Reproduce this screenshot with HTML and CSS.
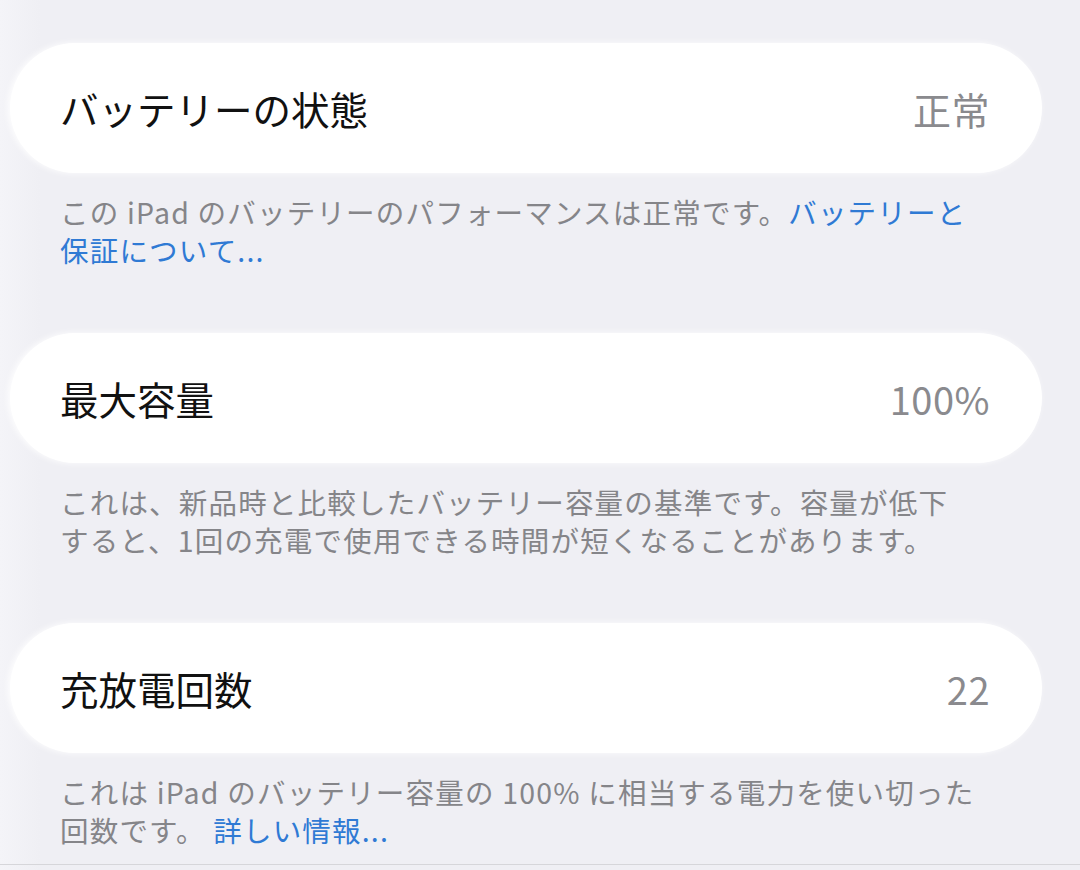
FILE: index.html
```html
<!DOCTYPE html>
<html lang="ja">
<head>
    <meta charset="UTF-8">
    <meta name="viewport" content="width=device-width, initial-scale=1.0">
    <title>バッテリーの状態</title>
    <link rel="stylesheet" href="styles.css">
</head>
<body>
    <div class="list">
        <div class="group">
            <div class="cell">
                <span class="label">バッテリーの状態</span>
                <span class="value">正常</span>
            </div>
            <p class="footnote">この iPad のバッテリーのパフォーマンスは正常です。<a href="#">バッテリーと保証について...</a></p>
        </div>
        <div class="group">
            <div class="cell">
                <span class="label">最大容量</span>
                <span class="value">100%</span>
            </div>
            <p class="footnote">これは、新品時と比較したバッテリー容量の基準です。容量が低下すると、1回の充電で使用できる時間が短くなることがあります。</p>
        </div>
        <div class="group">
            <div class="cell">
                <span class="label">充放電回数</span>
                <span class="value">22</span>
            </div>
            <p class="footnote">これは iPad のバッテリー容量の 100% に相当する電力を使い切った回数です。 <a href="#">詳しい情報...</a></p>
        </div>
    </div>
</body>
</html>
```

FILE: styles.css
```css
body {
    margin: 0;
    height: 870px;
    box-sizing: border-box;
    background: linear-gradient(to right, #f4f4f8 0, #efeff4 40px);
    font-family: "Noto Sans CJK JP", "Noto Sans", sans-serif;
    overflow: hidden;
}

.list {
    display: flex;
    flex-direction: column;
    gap: 64px;
    padding: 43px 38px 0 10px;
    height: 865px;
    box-sizing: border-box;
    border-bottom: 1px solid #d6d6da;
}

.cell {
    display: flex;
    align-items: center;
    justify-content: space-between;
    height: 130px;
    padding: 0 52px 0 50px;
    background-color: #fff;
    border-radius: 65px;
    box-shadow: -2px 0 6px rgba(255, 255, 255, 0.9);
}

.label {
    font-size: 38.5px;
    color: #111;
}

.value {
    font-size: 38px;
    letter-spacing: 0.5px;
    color: #8a8a8e;
}

.footnote {
    margin: 20px 0 0 50px;
    width: 916px;
    font-size: 28.5px;
    letter-spacing: 1.2px;
    line-height: 38px;
    color: #858589;
}

.footnote a {
    color: #2f7ad4;
    text-decoration: none;
}
```
